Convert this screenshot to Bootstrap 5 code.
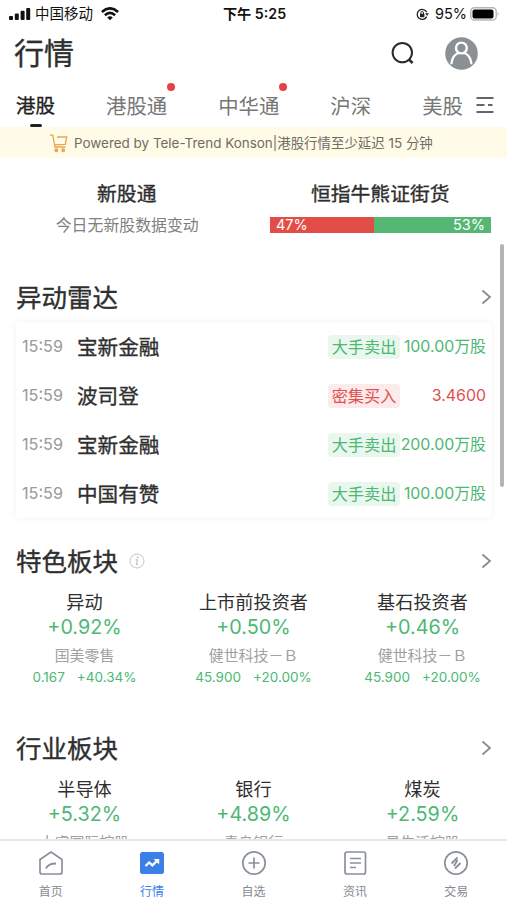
<!DOCTYPE html>
<html lang="zh-CN">
<head>
<meta charset="utf-8">
<meta name="viewport" content="width=device-width, initial-scale=1">
<title>行情</title>
<link href="https://cdn.jsdelivr.net/npm/bootstrap@5.3.0/dist/css/bootstrap.min.css" rel="stylesheet">
<style>
  body { font-family: Inter, "Noto Sans CJK SC", sans-serif; color: #2f2f2f; background: #fff; height: 900px; }
  svg { display: block; flex: none; }
  .medium { -webkit-text-stroke: .35px currentColor; }
  .status-bar { height: 28px; font-size: 14.5px; color: #111; padding: 0 7px 0 9px; }
  .status-side { width: 150px; }
  .status-clock { font-size: 14.2px; }
  .title-bar { height: 50px; padding: 0 29px 0 14px; }
  .page-title { font-size: 30px; line-height: 50px; }
  .market-tabs { height: 49px; gap: 51px; padding: 0 12px 0 16px; font-size: 20.4px; line-height: 57px; color: #777; }
  .market-tabs .current { color: #222; font-size: 19.5px; }
  .market-tabs .current::after { content: ""; position: absolute; left: 14px; bottom: 0; width: 12px; height: 3.5px; border-radius: 2px; background: #222; }
  .market-tabs .tabs-menu { margin: 18px 0 0 -38px; }
  .has-news::after { content: ""; position: absolute; right: -8px; top: 5px; width: 8px; height: 8px; border-radius: 50%; background: #e04444; }
  .notice { height: 31px; background: #fffbe6; color: #6f6c66; font-size: 13.45px; padding: 1px 0 0 50px; }
  .notice-text { margin-left: 6px; }
  .summary { height: 113px; padding-top: 21px; }
  .summary-title { font-size: 19.8px; line-height: 30px; }
  .summary-text { font-size: 15.9px; line-height: 24px; color: #808080; margin: 5px 0 0 1px; }
  .bull-bear { height: 16px; width: 221px; margin: 8px 0 0 16.5px; font-size: 14.5px; line-height: 16px; color: #fff; }
  .bull-bear-down { background: #e34d48; padding-left: 6px; }
  .bull-bear-up { background: #56b775; padding-right: 6px; }
  .section-head { height: 52px; padding: 0 15px 0 16px; font-size: 25.5px; line-height: 52px; }
  .section-head span { position: relative; top: 1px; }
  .radar { margin: -1px 15px 0 16px; height: 196px; border-radius: 3px; box-shadow: 0 0 7px rgba(0,0,0,.055); }
  .radar-row { height: 49px; padding: 0 6px; }
  .radar-time { width: 55px; font-size: 16.2px; color: #999; }
  .radar-name { font-size: 20.6px; line-height: 28px; margin-top: 3px; }
  .signal { width: 72px; height: 24px; line-height: 24px; border-radius: 4px; font-size: 16.2px; }
  .amount { width: 86px; font-size: 15.9px; }
  .up { color: #4db873; }
  .down { color: #e0504e; }
  .signal.up { background: #e9f7ee; }
  .signal.down { background: #fdeaea; }
  .sector-grid { padding-top: 2px; }
  .sector-name { font-size: 18.2px; line-height: 26px; }
  .sector-change { font-size: 19.8px; line-height: 24px; }
  .sector-stock { font-size: 14.9px; line-height: 24px; color: #a0a0a0; margin-top: 5px; }
  .sector-quote { font-size: 13.5px; line-height: 18px; height: 20px; gap: 12px; }
  .scroll-thumb { position: absolute; right: 3px; top: 86px; width: 4px; height: 243px; border-radius: 2px; background: #b5b5b5; }
  .bottom-bar { height: 61px; border-top: 2px solid #e8e8e8; background: #fff; font-size: 12px; color: #858a91; padding-top: 9px; }
  .bottom-bar span { line-height: 18px; margin-top: 7px; }
  .bottom-bar .current { color: #3a7fe8; }
</style>
</head>
<body class="d-flex flex-column overflow-hidden m-0">

<header class="flex-shrink-0">
  <div class="status-bar d-flex align-items-center justify-content-between">
    <div class="status-side d-flex align-items-center">
      <svg width="22" height="14" viewBox="0 0 22 14"><g fill="#111"><rect x="0" y="9" width="4" height="4" rx="1"/><rect x="5.8" y="6.5" width="4" height="6.5" rx="1"/><rect x="11.6" y="3.7" width="4" height="9.3" rx="1"/><rect x="17.2" y="1" width="4" height="12" rx="1"/></g></svg>
      <span class="ms-1">中国移动</span>
      <svg class="ms-2" width="18" height="14" viewBox="0 0 18 14"><path d="M.9 5Q9-2.300 17.100 5M3.900 8.200Q9 3.600 14.100 8.200" fill="none" stroke="#111" stroke-width="2.600"/><path d="M6.200 10.400Q9 8 11.800 10.400L9 13.300Z" fill="#111"/></svg>
    </div>
    <div class="status-clock fw-semibold">下午 5:25</div>
    <div class="status-side d-flex align-items-center justify-content-end">
      <svg width="13" height="13" viewBox="0 0 13 13"><path d="M10.700 4.200A5 5 0 1 0 10.700 8.600" fill="none" stroke="#222" stroke-width="1.300"/><path d="M9.200 5.300h3.700l-1.800 2.600z" fill="#222"/><rect x="4" y="5.700" width="4.400" height="3.500" rx=".5" fill="#222"/><path d="M4.900 6V4.800a1.300 1.300 0 0 1 2.600 0V6" fill="none" stroke="#222"/></svg>
      <span style="margin-left:6px">95%</span>
      <svg style="margin-left:3px" width="30" height="14" viewBox="0 0 30 14"><rect x=".8" y=".8" width="25.400" height="12.200" rx="3.600" fill="#fff" stroke="#b5b5b5" stroke-width="1.400"/><rect x="2.500" y="2.400" width="21" height="9" rx="2" fill="#000"/><path d="M27.600 4.700q2 2.200 0 4.400z" fill="#b5b5b5"/></svg>
    </div>
  </div>

  <div class="title-bar d-flex align-items-center justify-content-between">
    <h1 class="page-title fw-normal medium m-0">行情</h1>
    <div class="d-flex align-items-center">
      <svg width="24" height="24" viewBox="0 0 24 24" fill="none" stroke="#2b2b2b" stroke-width="2"><circle cx="11.300" cy="11.600" r="9.700"/><path d="M17.800 18.400l3.800 3.600" stroke-width="2.600"/></svg>
      <svg style="margin-left:30px" width="33" height="33" viewBox="0 0 33 33"><circle cx="16.500" cy="16.500" r="16.300" fill="#8b9094"/><g fill="none" stroke="#fff" stroke-width="2.400" stroke-linecap="round"><circle cx="16.400" cy="11" r="5.400"/><path d="M6.500 26.200c.6-5 3-8.700 7-10.200M26.300 26.200c-.6-5-3-8.700-7-10.200"/></g></svg>
    </div>
  </div>

  <nav class="market-tabs d-flex text-nowrap">
    <div class="current medium position-relative">港股</div>
    <div class="position-relative has-news">港股通</div>
    <div class="position-relative has-news">中华通</div>
    <div>沪深</div>
    <div>美股</div>
    <svg class="tabs-menu" width="18" height="18" viewBox="0 0 18 18" stroke="#666" stroke-width="1.800"><path d="M.5 2h17M.5 9h8M12 9h4.500M.5 16h17"/></svg>
  </nav>

  <div class="notice d-flex align-items-center text-nowrap">
    <svg width="18" height="19" viewBox="0 0 18 19" fill="none" stroke="#eba44b" stroke-width="1.300"><path d="M0 1.200h2.800L5 13h10.500M7 3h9.700l-1.400 7.300L4.700 10.800"/><circle cx="6.300" cy="16.300" r="1.300" fill="#eba44b"/><circle cx="13.200" cy="16.300" r="1.300" fill="#eba44b"/></svg>
    <span class="notice-text">Powered by Tele-Trend Konson|港股行情至少延迟 15 分钟</span>
  </div>
</header>

<main class="flex-fill overflow-hidden position-relative">
  <div class="summary row g-0 text-center">
    <div class="col-6">
      <div class="summary-title medium">新股通</div>
      <div class="summary-text">今日无新股数据变动</div>
    </div>
    <div class="col-6">
      <div class="summary-title medium">恒指牛熊证街货</div>
      <div class="bull-bear d-flex">
        <div class="bull-bear-down text-start" style="width:47%">47%</div>
        <div class="bull-bear-up text-end" style="width:53%">53%</div>
      </div>
    </div>
  </div>

  <section>
    <div class="section-head d-flex align-items-center justify-content-between">
      <span class="medium">异动雷达</span>
      <svg width="11" height="16" viewBox="0 0 11 16"><path d="M1.500 1.500L9 8l-7.500 6.500" fill="none" stroke="#888" stroke-width="1.700"/></svg>
    </div>
    <div class="radar">
      <div class="radar-row d-flex align-items-center"><span class="radar-time">15:59</span><span class="radar-name medium">宝新金融</span><span class="signal up ms-auto text-center">大手卖出</span><span class="amount up text-end">100.00万股</span></div>
      <div class="radar-row d-flex align-items-center"><span class="radar-time">15:59</span><span class="radar-name medium">波司登</span><span class="signal down ms-auto text-center">密集买入</span><span class="amount down text-end">3.4600</span></div>
      <div class="radar-row d-flex align-items-center"><span class="radar-time">15:59</span><span class="radar-name medium">宝新金融</span><span class="signal up ms-auto text-center">大手卖出</span><span class="amount up text-end">200.00万股</span></div>
      <div class="radar-row d-flex align-items-center"><span class="radar-time">15:59</span><span class="radar-name medium">中国有赞</span><span class="signal up ms-auto text-center">大手卖出</span><span class="amount up text-end">100.00万股</span></div>
    </div>
  </section>

  <section style="margin-top:17px">
    <div class="section-head d-flex align-items-center">
      <span class="medium">特色板块</span>
      <svg style="margin-left:11px" width="16" height="16" viewBox="0 0 16 16" fill="none" stroke="#c4c4c4"><circle cx="8" cy="8" r="7"/><path d="M6.600 6.800h1.900L7.400 11.600h1.500" stroke-width="1.200"/><circle cx="8.800" cy="4.300" r=".5" fill="#c4c4c4"/></svg>
      <svg class="ms-auto" width="11" height="16" viewBox="0 0 11 16"><path d="M1.500 1.500L9 8l-7.500 6.500" fill="none" stroke="#888" stroke-width="1.700"/></svg>
    </div>
    <div class="sector-grid row g-0 text-center text-nowrap">
      <div class="col-4"><div class="sector-name">异动</div><div class="sector-change up">+0.92%</div><div class="sector-stock">国美零售</div><div class="sector-quote up d-flex justify-content-center"><span>0.167</span><span>+40.34%</span></div></div>
      <div class="col-4"><div class="sector-name">上市前投资者</div><div class="sector-change up">+0.50%</div><div class="sector-stock">健世科技－Ｂ</div><div class="sector-quote up d-flex justify-content-center"><span>45.900</span><span>+20.00%</span></div></div>
      <div class="col-4"><div class="sector-name">基石投资者</div><div class="sector-change up">+0.46%</div><div class="sector-stock">健世科技－Ｂ</div><div class="sector-quote up d-flex justify-content-center"><span>45.900</span><span>+20.00%</span></div></div>
    </div>
  </section>

  <section style="margin-top:34px">
    <div class="section-head d-flex align-items-center justify-content-between">
      <span class="medium">行业板块</span>
      <svg width="11" height="16" viewBox="0 0 11 16"><path d="M1.500 1.500L9 8l-7.500 6.500" fill="none" stroke="#888" stroke-width="1.700"/></svg>
    </div>
    <div class="sector-grid row g-0 text-center text-nowrap">
      <div class="col-4"><div class="sector-name">半导体</div><div class="sector-change up">+5.32%</div><div class="sector-stock">太睿国际控股</div></div>
      <div class="col-4"><div class="sector-name">银行</div><div class="sector-change up">+4.89%</div><div class="sector-stock">青岛银行</div></div>
      <div class="col-4"><div class="sector-name">煤炭</div><div class="sector-change up">+2.59%</div><div class="sector-stock">易生活控股</div></div>
    </div>
  </section>
  <div class="scroll-thumb"></div>
</main>

<nav class="bottom-bar row g-0 flex-shrink-0 text-center">
  <div class="col d-flex flex-column align-items-center">
    <svg width="26" height="26" viewBox="0 0 26 26" fill="none" stroke="#8b919c" stroke-width="1.700"><path d="M2 9.500L13 2l11 7.500V22q0 2-2 2H4q-2 0-2-2z" stroke-linejoin="round"/><path d="M8 18.500q2-5 10-5" stroke-width="2"/></svg>
    <span>首页</span>
  </div>
  <div class="col d-flex flex-column align-items-center current">
    <svg width="26" height="26" viewBox="0 0 26 26"><rect x="1" y="2" width="24" height="22" rx="2.500" fill="#3a80e6"/><path d="M6.500 16l3.700-3.600 3.200 3 5-5" fill="none" stroke="#fff" stroke-width="2.200"/><path d="M14.700 9h5.500v5.500z" fill="#fff"/></svg>
    <span>行情</span>
  </div>
  <div class="col d-flex flex-column align-items-center">
    <svg width="26" height="26" viewBox="0 0 26 26" fill="none" stroke="#8b919c" stroke-width="1.700"><circle cx="13" cy="13" r="11.200"/><path d="M7.500 13h11M13 7.500v11"/></svg>
    <span>自选</span>
  </div>
  <div class="col d-flex flex-column align-items-center">
    <svg width="26" height="26" viewBox="0 0 26 26" fill="none" stroke="#8b919c" stroke-width="1.700"><rect x="3" y="2" width="20.500" height="22" rx="2"/><path d="M8 8.500h11M8 13h11M8 17.500h6"/></svg>
    <span>资讯</span>
  </div>
  <div class="col d-flex flex-column align-items-center">
    <svg width="26" height="26" viewBox="0 0 26 26" fill="none" stroke="#8b919c" stroke-width="1.700"><circle cx="13" cy="13" r="11.200"/><path d="M8.500 13.500l6-6M12 18.500l5.500-5.500M14.500 10l-3.500 6" stroke-width="1.900"/></svg>
    <span>交易</span>
  </div>
</nav>

<script src="https://cdn.jsdelivr.net/npm/bootstrap@5.3.0/dist/js/bootstrap.bundle.min.js"></script>
</body>
</html>
